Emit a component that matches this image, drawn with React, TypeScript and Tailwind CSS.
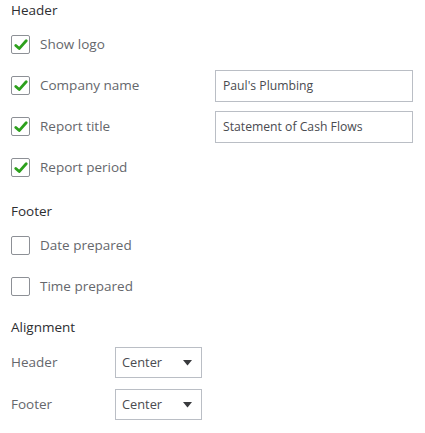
import React from 'react'

const font = { fontFamily: '"Open Sans", Lato, sans-serif' }

function Check({ checked }: { checked: boolean }) {
  return (
    <span className="flex h-[19px] w-[19px] shrink-0 items-center justify-center rounded-[2px] border border-[#8d9096] bg-white">
      {checked && (
        <svg width="14" height="12" viewBox="0 0 14 12" fill="none">
          <path d="M1.8 6.4 L5.2 9.6 L12.2 1.8" stroke="#2ca01c" strokeWidth="2.8" strokeLinecap="round" strokeLinejoin="round" />
        </svg>
      )}
    </span>
  )
}

function CheckRow({ label, checked, value }: { label: string; checked: boolean; value?: string }) {
  return (
    <div className="flex h-[41px] items-center">
      <div className="flex w-[204px] items-center gap-[10px]">
        <Check checked={checked} />
        <span className="text-[13.5px] text-[#65676c]">{label}</span>
      </div>
      {value && (
        <div className="flex h-[32px] w-[198px] items-center border border-[#babec5] px-[7px] pt-[1px] text-[12.2px] text-[#4a4b50]">
          {value}
        </div>
      )}
    </div>
  )
}

function Select({ label }: { label: string }) {
  return (
    <div className="flex h-[42px] items-center">
      <span className="w-[104px] text-[13.5px] text-[#65676c]">{label}</span>
      <div className="flex h-[31px] w-[87px] items-center justify-between border border-[#babec5] pl-[6px] pr-[9px] pt-[2px] text-[12.8px] text-[#4a4b50]">
        <span>Center</span>
        <svg width="9" height="6" viewBox="0 0 9 6">
          <path d="M0 0 L9 0 L4.5 5.5 Z" fill="#393a3d" />
        </svg>
      </div>
    </div>
  )
}

export default function App() {
  return (
    <div className="min-h-screen bg-white pl-[11px]" style={font}>
      <div className="h-5 text-[13.5px] leading-5 font-medium text-[#2d2e31]">Header</div>
      <div className="mt-1">
        <CheckRow label="Show logo" checked />
        <CheckRow label="Company name" checked value="Paul's Plumbing" />
        <CheckRow label="Report title" checked value="Statement of Cash Flows" />
        <CheckRow label="Report period" checked />
      </div>

      <div className="mt-[13px] h-5 text-[13.5px] leading-5 font-medium text-[#2d2e31]">Footer</div>
      <div className="mt-[4px]">
        <CheckRow label="Date prepared" checked={false} />
        <CheckRow label="Time prepared" checked={false} />
      </div>

      <div className="mt-[10px] h-5 text-[13.5px] leading-5 font-medium text-[#2d2e31]">Alignment</div>
      <div className="mt-[4px]">
        <Select label="Header" />
        <Select label="Footer" />
      </div>
    </div>
  )
}
